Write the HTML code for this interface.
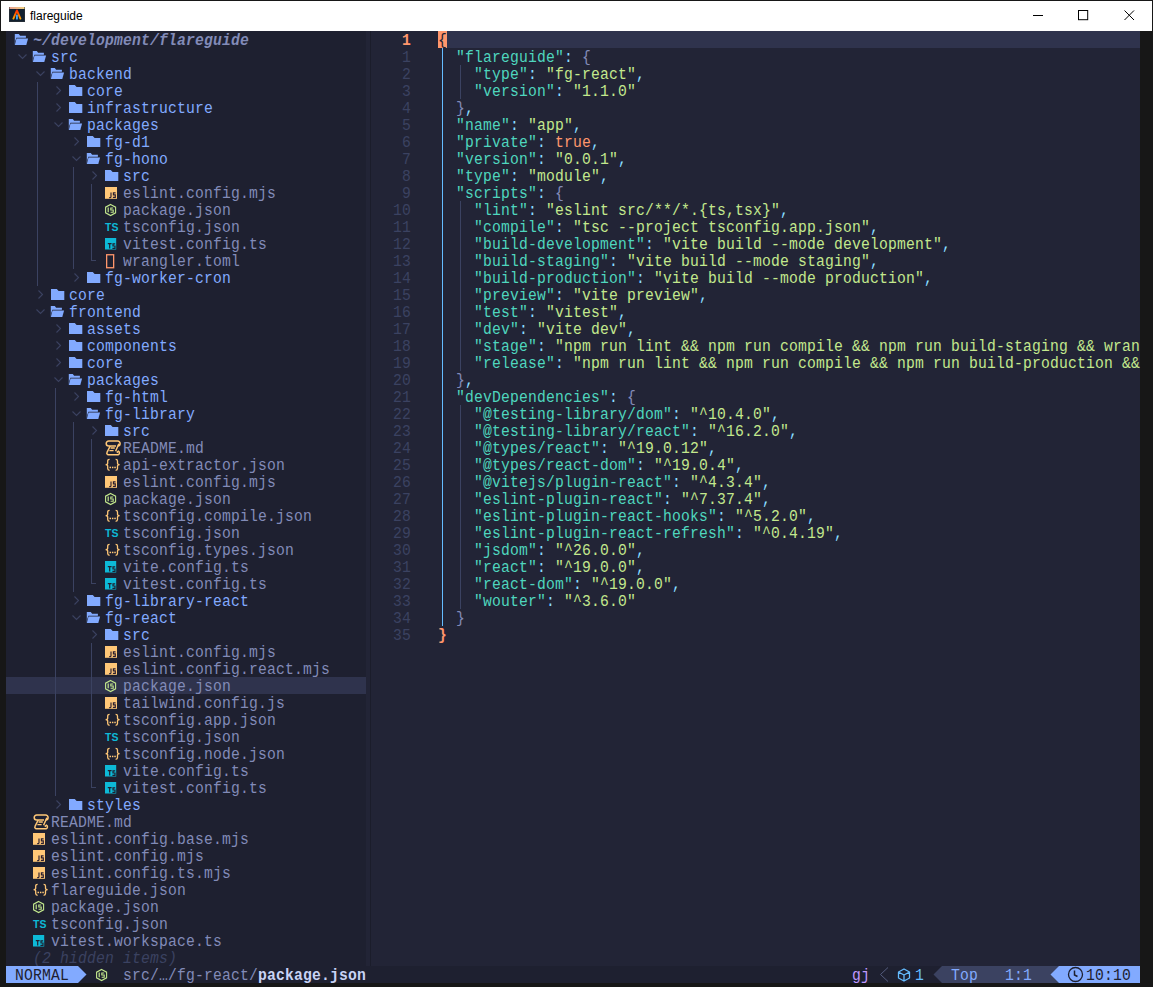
<!DOCTYPE html>
<html><head><meta charset="utf-8"><style>
html,body{margin:0;padding:0;}
body{width:1153px;height:987px;position:relative;overflow:hidden;background:#171717;}
.t{position:absolute;font-family:"Liberation Mono",monospace;font-size:16px;line-height:17px;height:17px;letter-spacing:0.1826px;white-space:pre;transform:scale(0.92,1.08);transform-origin:0 12px;}
svg{display:block;overflow:visible}
</style></head><body>
<div style="position:absolute;left:0px;top:0px;width:1153px;height:987px;background:#171717;"></div>
<div style="position:absolute;left:1px;top:1px;width:1151px;height:30px;background:#ffffff;"></div>
<svg style="position:absolute;left:9px;top:7px;" width="16" height="15" viewBox="0 0 16 15"><defs><linearGradient id="tg" x1="0" x2="1" y1="0" y2="0"><stop offset="0" stop-color="#e8a090"/><stop offset="1" stop-color="#f0d080"/></linearGradient><linearGradient id="ag" x1="0" x2="0" y1="0" y2="1"><stop offset="0" stop-color="#ff2a00"/><stop offset="1" stop-color="#ffa600"/></linearGradient></defs><rect x="0" y="0" width="16" height="15" fill="#2a3038"/><rect x="0.8" y="2" width="14.4" height="12.2" fill="#112030"/><rect x="0.5" y="0" width="15" height="2" fill="url(#tg)"/><path d="M4.4 11.6 L7.9 3.4 L11.4 11.6" stroke="url(#ag)" stroke-width="1.9" stroke-linecap="round" stroke-linejoin="round" fill="none"/><rect x="7" y="7.6" width="1.9" height="5" rx="0.9" fill="#4aa8f0"/></svg>
<div style="position:absolute;left:30px;top:8px;font-family:'Liberation Sans',sans-serif;font-size:12px;line-height:16px;color:#000">flareguide</div>
<div style="position:absolute;left:1033px;top:15px;width:10px;height:1px;background:#000;"></div>
<svg style="position:absolute;left:1078px;top:10px;" width="11" height="11" viewBox="0 0 11 11"><rect x="0.5" y="0.5" width="9.2" height="9.2" fill="none" stroke="#000" stroke-width="1"/></svg>
<svg style="position:absolute;left:1124px;top:10px;" width="11" height="11" viewBox="0 0 11 11"><path d="M0.5 0.5 L10 10 M10 0.5 L0.5 10" stroke="#000" stroke-width="1" fill="none"/></svg>
<div style="position:absolute;left:6px;top:31px;width:360px;height:935px;background:#1e2030;"></div>
<div style="position:absolute;left:366px;top:31px;width:774px;height:935px;background:#222436;"></div>
<div style="position:absolute;left:370px;top:31px;width:1px;height:935px;background:#1b1d2b;"></div>
<div style="position:absolute;left:6px;top:966px;width:1134px;height:17px;background:#1e2030;"></div>
<svg style="position:absolute;left:15px;top:34px;" width="14" height="12" viewBox="0 0 14 12"><path d="M-0.2 0 H3.8 L5.1 1.8 H10.9 V3.8 H1.4 L0.2 7.8 V11 H-0.2 Z" fill="#82aaff"/><path d="M1.5 4.5 H13.1 L11.3 11 H-0.1 Z" fill="#82aaff" stroke="#1e2030" stroke-width="0.5" paint-order="stroke"/></svg>
<div class="t" style="left:33px;top:33px;color:#828bb8;font-weight:bold;font-style:italic;">~/development/flareguide</div>
<div style="position:absolute;left:6px;top:677px;width:360px;height:17px;background:#2f334d;"></div>
<div style="position:absolute;left:37px;top:82px;width:1px;height:204px;background:#3b4261;"></div>
<div style="position:absolute;left:73px;top:167px;width:1px;height:102px;background:#3b4261;"></div>
<div style="position:absolute;left:55px;top:388px;width:1px;height:408px;background:#3b4261;"></div>
<div style="position:absolute;left:73px;top:422px;width:1px;height:170px;background:#3b4261;"></div>
<div style="position:absolute;left:91px;top:184px;width:1px;height:68px;background:#3b4261;"></div>
<div style="position:absolute;left:91px;top:252px;width:1px;height:9px;background:#3b4261;"></div>
<div style="position:absolute;left:91px;top:260px;width:5px;height:1px;background:#3b4261;"></div>
<div style="position:absolute;left:91px;top:439px;width:1px;height:136px;background:#3b4261;"></div>
<div style="position:absolute;left:91px;top:575px;width:1px;height:9px;background:#3b4261;"></div>
<div style="position:absolute;left:91px;top:583px;width:5px;height:1px;background:#3b4261;"></div>
<div style="position:absolute;left:91px;top:643px;width:1px;height:136px;background:#3b4261;"></div>
<div style="position:absolute;left:91px;top:779px;width:1px;height:9px;background:#3b4261;"></div>
<div style="position:absolute;left:91px;top:787px;width:5px;height:1px;background:#3b4261;"></div>
<svg style="position:absolute;left:18px;top:54px;" width="10" height="6" viewBox="0 0 10 6"><path d="M0.5 0.5 L4.5 4.5 L8.5 0.5" stroke="#3b4261" stroke-width="1.1" fill="none"/></svg>
<svg style="position:absolute;left:33px;top:51px;" width="14" height="12" viewBox="0 0 14 12"><path d="M-0.2 0 H3.8 L5.1 1.8 H10.9 V3.8 H1.4 L0.2 7.8 V11 H-0.2 Z" fill="#82aaff"/><path d="M1.5 4.5 H13.1 L11.3 11 H-0.1 Z" fill="#82aaff" stroke="#1e2030" stroke-width="0.5" paint-order="stroke"/></svg>
<div class="t" style="left:51px;top:50px;color:#82aaff;">src</div>
<svg style="position:absolute;left:36px;top:71px;" width="10" height="6" viewBox="0 0 10 6"><path d="M0.5 0.5 L4.5 4.5 L8.5 0.5" stroke="#3b4261" stroke-width="1.1" fill="none"/></svg>
<svg style="position:absolute;left:51px;top:68px;" width="14" height="12" viewBox="0 0 14 12"><path d="M-0.2 0 H3.8 L5.1 1.8 H10.9 V3.8 H1.4 L0.2 7.8 V11 H-0.2 Z" fill="#82aaff"/><path d="M1.5 4.5 H13.1 L11.3 11 H-0.1 Z" fill="#82aaff" stroke="#1e2030" stroke-width="0.5" paint-order="stroke"/></svg>
<div class="t" style="left:69px;top:67px;color:#82aaff;">backend</div>
<svg style="position:absolute;left:56px;top:86px;" width="6" height="10" viewBox="0 0 6 10"><path d="M0.5 0.5 L4.5 4.5 L0.5 8.5" stroke="#3b4261" stroke-width="1.1" fill="none"/></svg>
<svg style="position:absolute;left:69px;top:85px;" width="14" height="11" viewBox="0 0 14 11"><path d="M0 0 H5.8 L7.6 1.9 H13.3 V11.1 H0 Z" fill="#82aaff"/></svg>
<div class="t" style="left:87px;top:84px;color:#82aaff;">core</div>
<svg style="position:absolute;left:56px;top:103px;" width="6" height="10" viewBox="0 0 6 10"><path d="M0.5 0.5 L4.5 4.5 L0.5 8.5" stroke="#3b4261" stroke-width="1.1" fill="none"/></svg>
<svg style="position:absolute;left:69px;top:102px;" width="14" height="11" viewBox="0 0 14 11"><path d="M0 0 H5.8 L7.6 1.9 H13.3 V11.1 H0 Z" fill="#82aaff"/></svg>
<div class="t" style="left:87px;top:101px;color:#82aaff;">infrastructure</div>
<svg style="position:absolute;left:54px;top:122px;" width="10" height="6" viewBox="0 0 10 6"><path d="M0.5 0.5 L4.5 4.5 L8.5 0.5" stroke="#3b4261" stroke-width="1.1" fill="none"/></svg>
<svg style="position:absolute;left:69px;top:119px;" width="14" height="12" viewBox="0 0 14 12"><path d="M-0.2 0 H3.8 L5.1 1.8 H10.9 V3.8 H1.4 L0.2 7.8 V11 H-0.2 Z" fill="#82aaff"/><path d="M1.5 4.5 H13.1 L11.3 11 H-0.1 Z" fill="#82aaff" stroke="#1e2030" stroke-width="0.5" paint-order="stroke"/></svg>
<div class="t" style="left:87px;top:118px;color:#82aaff;">packages</div>
<svg style="position:absolute;left:74px;top:137px;" width="6" height="10" viewBox="0 0 6 10"><path d="M0.5 0.5 L4.5 4.5 L0.5 8.5" stroke="#3b4261" stroke-width="1.1" fill="none"/></svg>
<svg style="position:absolute;left:87px;top:136px;" width="14" height="11" viewBox="0 0 14 11"><path d="M0 0 H5.8 L7.6 1.9 H13.3 V11.1 H0 Z" fill="#82aaff"/></svg>
<div class="t" style="left:105px;top:135px;color:#82aaff;">fg-d1</div>
<svg style="position:absolute;left:72px;top:156px;" width="10" height="6" viewBox="0 0 10 6"><path d="M0.5 0.5 L4.5 4.5 L8.5 0.5" stroke="#3b4261" stroke-width="1.1" fill="none"/></svg>
<svg style="position:absolute;left:87px;top:153px;" width="14" height="12" viewBox="0 0 14 12"><path d="M-0.2 0 H3.8 L5.1 1.8 H10.9 V3.8 H1.4 L0.2 7.8 V11 H-0.2 Z" fill="#82aaff"/><path d="M1.5 4.5 H13.1 L11.3 11 H-0.1 Z" fill="#82aaff" stroke="#1e2030" stroke-width="0.5" paint-order="stroke"/></svg>
<div class="t" style="left:105px;top:152px;color:#82aaff;">fg-hono</div>
<svg style="position:absolute;left:92px;top:171px;" width="6" height="10" viewBox="0 0 6 10"><path d="M0.5 0.5 L4.5 4.5 L0.5 8.5" stroke="#3b4261" stroke-width="1.1" fill="none"/></svg>
<svg style="position:absolute;left:105px;top:170px;" width="14" height="11" viewBox="0 0 14 11"><path d="M0 0 H5.8 L7.6 1.9 H13.3 V11.1 H0 Z" fill="#82aaff"/></svg>
<div class="t" style="left:123px;top:169px;color:#82aaff;">src</div>
<svg style="position:absolute;left:105px;top:187px;" width="12" height="12" viewBox="0 0 12 12"><rect width="12" height="11.8" fill="#ffc777"/><path d="M6 5.6 V9.8 Q6 10.6 5.2 10.6 H4.2 M10.6 5.8 H8.4 V7.9 H10.3 V10.3 H7.9" fill="none" stroke="#2a1e30" stroke-width="1.15"/></svg>
<div class="t" style="left:123px;top:186px;color:#828bb8;">eslint.config.mjs</div>
<svg style="position:absolute;left:105px;top:203px;" width="13" height="14" viewBox="0 0 13 14"><path d="M5.6 1.5 L10.6 4.2 V9.8 L5.6 12.5 L0.6 9.8 V4.2 Z" fill="none" stroke="#c3e88d" stroke-width="1.1"/><path d="M3.2 4.5 V9.2" stroke="#c3e88d" stroke-width="1.2"/><path d="M8.2 5 H5.8 V7 H8.2 V9.2 H5.6" fill="none" stroke="#c3e88d" stroke-width="1.1"/></svg>
<div class="t" style="left:123px;top:203px;color:#828bb8;">package.json</div>
<svg style="position:absolute;left:105px;top:222px;" width="14" height="10" viewBox="0 0 14 10"><text x="0" y="9" font-family="Liberation Sans" font-weight="bold" font-size="10.5" fill="#0db9d7">TS</text></svg>
<div class="t" style="left:123px;top:220px;color:#828bb8;">tsconfig.json</div>
<svg style="position:absolute;left:105px;top:238px;" width="11" height="12" viewBox="0 0 11 12"><rect width="11.2" height="11.5" fill="#0db9d7"/><path d="M2.8 5.6 H6.6 M4.7 5.6 V10.6 M10.2 5.8 H8 V8 H10 V10.3 H7.4" fill="none" stroke="#1e2030" stroke-width="1.2"/></svg>
<div class="t" style="left:123px;top:237px;color:#828bb8;">vitest.config.ts</div>
<svg style="position:absolute;left:106px;top:254px;" width="9" height="15" viewBox="0 0 9 15"><rect x="0.65" y="0.75" width="7" height="13" fill="none" stroke="#ff966c" stroke-width="1.3"/></svg>
<div class="t" style="left:123px;top:254px;color:#828bb8;">wrangler.toml</div>
<svg style="position:absolute;left:74px;top:273px;" width="6" height="10" viewBox="0 0 6 10"><path d="M0.5 0.5 L4.5 4.5 L0.5 8.5" stroke="#3b4261" stroke-width="1.1" fill="none"/></svg>
<svg style="position:absolute;left:87px;top:272px;" width="14" height="11" viewBox="0 0 14 11"><path d="M0 0 H5.8 L7.6 1.9 H13.3 V11.1 H0 Z" fill="#82aaff"/></svg>
<div class="t" style="left:105px;top:271px;color:#82aaff;">fg-worker-cron</div>
<svg style="position:absolute;left:38px;top:290px;" width="6" height="10" viewBox="0 0 6 10"><path d="M0.5 0.5 L4.5 4.5 L0.5 8.5" stroke="#3b4261" stroke-width="1.1" fill="none"/></svg>
<svg style="position:absolute;left:51px;top:289px;" width="14" height="11" viewBox="0 0 14 11"><path d="M0 0 H5.8 L7.6 1.9 H13.3 V11.1 H0 Z" fill="#82aaff"/></svg>
<div class="t" style="left:69px;top:288px;color:#82aaff;">core</div>
<svg style="position:absolute;left:36px;top:309px;" width="10" height="6" viewBox="0 0 10 6"><path d="M0.5 0.5 L4.5 4.5 L8.5 0.5" stroke="#3b4261" stroke-width="1.1" fill="none"/></svg>
<svg style="position:absolute;left:51px;top:306px;" width="14" height="12" viewBox="0 0 14 12"><path d="M-0.2 0 H3.8 L5.1 1.8 H10.9 V3.8 H1.4 L0.2 7.8 V11 H-0.2 Z" fill="#82aaff"/><path d="M1.5 4.5 H13.1 L11.3 11 H-0.1 Z" fill="#82aaff" stroke="#1e2030" stroke-width="0.5" paint-order="stroke"/></svg>
<div class="t" style="left:69px;top:305px;color:#82aaff;">frontend</div>
<svg style="position:absolute;left:56px;top:324px;" width="6" height="10" viewBox="0 0 6 10"><path d="M0.5 0.5 L4.5 4.5 L0.5 8.5" stroke="#3b4261" stroke-width="1.1" fill="none"/></svg>
<svg style="position:absolute;left:69px;top:323px;" width="14" height="11" viewBox="0 0 14 11"><path d="M0 0 H5.8 L7.6 1.9 H13.3 V11.1 H0 Z" fill="#82aaff"/></svg>
<div class="t" style="left:87px;top:322px;color:#82aaff;">assets</div>
<svg style="position:absolute;left:56px;top:341px;" width="6" height="10" viewBox="0 0 6 10"><path d="M0.5 0.5 L4.5 4.5 L0.5 8.5" stroke="#3b4261" stroke-width="1.1" fill="none"/></svg>
<svg style="position:absolute;left:69px;top:340px;" width="14" height="11" viewBox="0 0 14 11"><path d="M0 0 H5.8 L7.6 1.9 H13.3 V11.1 H0 Z" fill="#82aaff"/></svg>
<div class="t" style="left:87px;top:339px;color:#82aaff;">components</div>
<svg style="position:absolute;left:56px;top:358px;" width="6" height="10" viewBox="0 0 6 10"><path d="M0.5 0.5 L4.5 4.5 L0.5 8.5" stroke="#3b4261" stroke-width="1.1" fill="none"/></svg>
<svg style="position:absolute;left:69px;top:357px;" width="14" height="11" viewBox="0 0 14 11"><path d="M0 0 H5.8 L7.6 1.9 H13.3 V11.1 H0 Z" fill="#82aaff"/></svg>
<div class="t" style="left:87px;top:356px;color:#82aaff;">core</div>
<svg style="position:absolute;left:54px;top:377px;" width="10" height="6" viewBox="0 0 10 6"><path d="M0.5 0.5 L4.5 4.5 L8.5 0.5" stroke="#3b4261" stroke-width="1.1" fill="none"/></svg>
<svg style="position:absolute;left:69px;top:374px;" width="14" height="12" viewBox="0 0 14 12"><path d="M-0.2 0 H3.8 L5.1 1.8 H10.9 V3.8 H1.4 L0.2 7.8 V11 H-0.2 Z" fill="#82aaff"/><path d="M1.5 4.5 H13.1 L11.3 11 H-0.1 Z" fill="#82aaff" stroke="#1e2030" stroke-width="0.5" paint-order="stroke"/></svg>
<div class="t" style="left:87px;top:373px;color:#82aaff;">packages</div>
<svg style="position:absolute;left:74px;top:392px;" width="6" height="10" viewBox="0 0 6 10"><path d="M0.5 0.5 L4.5 4.5 L0.5 8.5" stroke="#3b4261" stroke-width="1.1" fill="none"/></svg>
<svg style="position:absolute;left:87px;top:391px;" width="14" height="11" viewBox="0 0 14 11"><path d="M0 0 H5.8 L7.6 1.9 H13.3 V11.1 H0 Z" fill="#82aaff"/></svg>
<div class="t" style="left:105px;top:390px;color:#82aaff;">fg-html</div>
<svg style="position:absolute;left:72px;top:411px;" width="10" height="6" viewBox="0 0 10 6"><path d="M0.5 0.5 L4.5 4.5 L8.5 0.5" stroke="#3b4261" stroke-width="1.1" fill="none"/></svg>
<svg style="position:absolute;left:87px;top:408px;" width="14" height="12" viewBox="0 0 14 12"><path d="M-0.2 0 H3.8 L5.1 1.8 H10.9 V3.8 H1.4 L0.2 7.8 V11 H-0.2 Z" fill="#82aaff"/><path d="M1.5 4.5 H13.1 L11.3 11 H-0.1 Z" fill="#82aaff" stroke="#1e2030" stroke-width="0.5" paint-order="stroke"/></svg>
<div class="t" style="left:105px;top:407px;color:#82aaff;">fg-library</div>
<svg style="position:absolute;left:92px;top:426px;" width="6" height="10" viewBox="0 0 6 10"><path d="M0.5 0.5 L4.5 4.5 L0.5 8.5" stroke="#3b4261" stroke-width="1.1" fill="none"/></svg>
<svg style="position:absolute;left:105px;top:425px;" width="14" height="11" viewBox="0 0 14 11"><path d="M0 0 H5.8 L7.6 1.9 H13.3 V11.1 H0 Z" fill="#82aaff"/></svg>
<div class="t" style="left:123px;top:424px;color:#82aaff;">src</div>
<svg style="position:absolute;left:105px;top:439px;" width="16" height="17" viewBox="0 0 16 17"><path d="M3.7 2 H12.6 A2.5 2.5 0 0 1 12.6 7 M3.7 2 A2.5 2.5 0 0 0 3.7 7 H11" fill="none" stroke="#ffc777" stroke-width="1.5"/><path d="M5.2 7 L2 13.3 A1.6 1.6 0 0 0 3.4 15.7 H13.2 A1.9 1.9 0 0 0 13.4 12.2 L11.8 13.6 M13.9 4.8 L10.6 12.2" fill="none" stroke="#ffc777" stroke-width="1.5"/><path d="M5.6 9 H9.8 M4.4 11.7 H8.6" stroke="#ffc777" stroke-width="1.3"/></svg>
<div class="t" style="left:123px;top:441px;color:#828bb8;">README.md</div>
<svg style="position:absolute;left:105px;top:456px;" width="16" height="17" viewBox="0 0 16 17"><path d="M4.6 3.3 Q2.7 3.3 2.7 5 V7.6 Q2.7 8.7 0.6 8.7 Q2.7 8.7 2.7 9.8 V12.6 Q2.7 14.3 4.6 14.3" fill="none" stroke="#ffc777" stroke-width="1.3"/><path d="M10.6 3.3 Q12.5 3.3 12.5 5 V7.6 Q12.5 8.7 14.6 8.7 Q12.5 8.7 12.5 9.8 V12.6 Q12.5 14.3 10.6 14.3" fill="none" stroke="#ffc777" stroke-width="1.3"/><rect x="4.5" y="10.7" width="1.5" height="1.5" fill="#ffc777"/><rect x="6.9" y="10.7" width="1.5" height="1.5" fill="#ffc777"/><rect x="9.3" y="10.7" width="1.5" height="1.5" fill="#ffc777"/></svg>
<div class="t" style="left:123px;top:458px;color:#828bb8;">api-extractor.json</div>
<svg style="position:absolute;left:105px;top:476px;" width="12" height="12" viewBox="0 0 12 12"><rect width="12" height="11.8" fill="#ffc777"/><path d="M6 5.6 V9.8 Q6 10.6 5.2 10.6 H4.2 M10.6 5.8 H8.4 V7.9 H10.3 V10.3 H7.9" fill="none" stroke="#2a1e30" stroke-width="1.15"/></svg>
<div class="t" style="left:123px;top:475px;color:#828bb8;">eslint.config.mjs</div>
<svg style="position:absolute;left:105px;top:492px;" width="13" height="14" viewBox="0 0 13 14"><path d="M5.6 1.5 L10.6 4.2 V9.8 L5.6 12.5 L0.6 9.8 V4.2 Z" fill="none" stroke="#c3e88d" stroke-width="1.1"/><path d="M3.2 4.5 V9.2" stroke="#c3e88d" stroke-width="1.2"/><path d="M8.2 5 H5.8 V7 H8.2 V9.2 H5.6" fill="none" stroke="#c3e88d" stroke-width="1.1"/></svg>
<div class="t" style="left:123px;top:492px;color:#828bb8;">package.json</div>
<svg style="position:absolute;left:105px;top:507px;" width="16" height="17" viewBox="0 0 16 17"><path d="M4.6 3.3 Q2.7 3.3 2.7 5 V7.6 Q2.7 8.7 0.6 8.7 Q2.7 8.7 2.7 9.8 V12.6 Q2.7 14.3 4.6 14.3" fill="none" stroke="#ffc777" stroke-width="1.3"/><path d="M10.6 3.3 Q12.5 3.3 12.5 5 V7.6 Q12.5 8.7 14.6 8.7 Q12.5 8.7 12.5 9.8 V12.6 Q12.5 14.3 10.6 14.3" fill="none" stroke="#ffc777" stroke-width="1.3"/><rect x="4.5" y="10.7" width="1.5" height="1.5" fill="#ffc777"/><rect x="6.9" y="10.7" width="1.5" height="1.5" fill="#ffc777"/><rect x="9.3" y="10.7" width="1.5" height="1.5" fill="#ffc777"/></svg>
<div class="t" style="left:123px;top:509px;color:#828bb8;">tsconfig.compile.json</div>
<svg style="position:absolute;left:105px;top:528px;" width="14" height="10" viewBox="0 0 14 10"><text x="0" y="9" font-family="Liberation Sans" font-weight="bold" font-size="10.5" fill="#0db9d7">TS</text></svg>
<div class="t" style="left:123px;top:526px;color:#828bb8;">tsconfig.json</div>
<svg style="position:absolute;left:105px;top:541px;" width="16" height="17" viewBox="0 0 16 17"><path d="M4.6 3.3 Q2.7 3.3 2.7 5 V7.6 Q2.7 8.7 0.6 8.7 Q2.7 8.7 2.7 9.8 V12.6 Q2.7 14.3 4.6 14.3" fill="none" stroke="#ffc777" stroke-width="1.3"/><path d="M10.6 3.3 Q12.5 3.3 12.5 5 V7.6 Q12.5 8.7 14.6 8.7 Q12.5 8.7 12.5 9.8 V12.6 Q12.5 14.3 10.6 14.3" fill="none" stroke="#ffc777" stroke-width="1.3"/><rect x="4.5" y="10.7" width="1.5" height="1.5" fill="#ffc777"/><rect x="6.9" y="10.7" width="1.5" height="1.5" fill="#ffc777"/><rect x="9.3" y="10.7" width="1.5" height="1.5" fill="#ffc777"/></svg>
<div class="t" style="left:123px;top:543px;color:#828bb8;">tsconfig.types.json</div>
<svg style="position:absolute;left:105px;top:561px;" width="11" height="12" viewBox="0 0 11 12"><rect width="11.2" height="11.5" fill="#0db9d7"/><path d="M2.8 5.6 H6.6 M4.7 5.6 V10.6 M10.2 5.8 H8 V8 H10 V10.3 H7.4" fill="none" stroke="#1e2030" stroke-width="1.2"/></svg>
<div class="t" style="left:123px;top:560px;color:#828bb8;">vite.config.ts</div>
<svg style="position:absolute;left:105px;top:578px;" width="11" height="12" viewBox="0 0 11 12"><rect width="11.2" height="11.5" fill="#0db9d7"/><path d="M2.8 5.6 H6.6 M4.7 5.6 V10.6 M10.2 5.8 H8 V8 H10 V10.3 H7.4" fill="none" stroke="#1e2030" stroke-width="1.2"/></svg>
<div class="t" style="left:123px;top:577px;color:#828bb8;">vitest.config.ts</div>
<svg style="position:absolute;left:74px;top:596px;" width="6" height="10" viewBox="0 0 6 10"><path d="M0.5 0.5 L4.5 4.5 L0.5 8.5" stroke="#3b4261" stroke-width="1.1" fill="none"/></svg>
<svg style="position:absolute;left:87px;top:595px;" width="14" height="11" viewBox="0 0 14 11"><path d="M0 0 H5.8 L7.6 1.9 H13.3 V11.1 H0 Z" fill="#82aaff"/></svg>
<div class="t" style="left:105px;top:594px;color:#82aaff;">fg-library-react</div>
<svg style="position:absolute;left:72px;top:615px;" width="10" height="6" viewBox="0 0 10 6"><path d="M0.5 0.5 L4.5 4.5 L8.5 0.5" stroke="#3b4261" stroke-width="1.1" fill="none"/></svg>
<svg style="position:absolute;left:87px;top:612px;" width="14" height="12" viewBox="0 0 14 12"><path d="M-0.2 0 H3.8 L5.1 1.8 H10.9 V3.8 H1.4 L0.2 7.8 V11 H-0.2 Z" fill="#82aaff"/><path d="M1.5 4.5 H13.1 L11.3 11 H-0.1 Z" fill="#82aaff" stroke="#1e2030" stroke-width="0.5" paint-order="stroke"/></svg>
<div class="t" style="left:105px;top:611px;color:#82aaff;">fg-react</div>
<svg style="position:absolute;left:92px;top:630px;" width="6" height="10" viewBox="0 0 6 10"><path d="M0.5 0.5 L4.5 4.5 L0.5 8.5" stroke="#3b4261" stroke-width="1.1" fill="none"/></svg>
<svg style="position:absolute;left:105px;top:629px;" width="14" height="11" viewBox="0 0 14 11"><path d="M0 0 H5.8 L7.6 1.9 H13.3 V11.1 H0 Z" fill="#82aaff"/></svg>
<div class="t" style="left:123px;top:628px;color:#82aaff;">src</div>
<svg style="position:absolute;left:105px;top:646px;" width="12" height="12" viewBox="0 0 12 12"><rect width="12" height="11.8" fill="#ffc777"/><path d="M6 5.6 V9.8 Q6 10.6 5.2 10.6 H4.2 M10.6 5.8 H8.4 V7.9 H10.3 V10.3 H7.9" fill="none" stroke="#2a1e30" stroke-width="1.15"/></svg>
<div class="t" style="left:123px;top:645px;color:#828bb8;">eslint.config.mjs</div>
<svg style="position:absolute;left:105px;top:663px;" width="12" height="12" viewBox="0 0 12 12"><rect width="12" height="11.8" fill="#ffc777"/><path d="M6 5.6 V9.8 Q6 10.6 5.2 10.6 H4.2 M10.6 5.8 H8.4 V7.9 H10.3 V10.3 H7.9" fill="none" stroke="#2a1e30" stroke-width="1.15"/></svg>
<div class="t" style="left:123px;top:662px;color:#828bb8;">eslint.config.react.mjs</div>
<svg style="position:absolute;left:105px;top:679px;" width="13" height="14" viewBox="0 0 13 14"><path d="M5.6 1.5 L10.6 4.2 V9.8 L5.6 12.5 L0.6 9.8 V4.2 Z" fill="none" stroke="#c3e88d" stroke-width="1.1"/><path d="M3.2 4.5 V9.2" stroke="#c3e88d" stroke-width="1.2"/><path d="M8.2 5 H5.8 V7 H8.2 V9.2 H5.6" fill="none" stroke="#c3e88d" stroke-width="1.1"/></svg>
<div class="t" style="left:123px;top:679px;color:#828bb8;">package.json</div>
<svg style="position:absolute;left:105px;top:697px;" width="12" height="12" viewBox="0 0 12 12"><rect width="12" height="11.8" fill="#ffc777"/><path d="M6 5.6 V9.8 Q6 10.6 5.2 10.6 H4.2 M10.6 5.8 H8.4 V7.9 H10.3 V10.3 H7.9" fill="none" stroke="#2a1e30" stroke-width="1.15"/></svg>
<div class="t" style="left:123px;top:696px;color:#828bb8;">tailwind.config.js</div>
<svg style="position:absolute;left:105px;top:711px;" width="16" height="17" viewBox="0 0 16 17"><path d="M4.6 3.3 Q2.7 3.3 2.7 5 V7.6 Q2.7 8.7 0.6 8.7 Q2.7 8.7 2.7 9.8 V12.6 Q2.7 14.3 4.6 14.3" fill="none" stroke="#ffc777" stroke-width="1.3"/><path d="M10.6 3.3 Q12.5 3.3 12.5 5 V7.6 Q12.5 8.7 14.6 8.7 Q12.5 8.7 12.5 9.8 V12.6 Q12.5 14.3 10.6 14.3" fill="none" stroke="#ffc777" stroke-width="1.3"/><rect x="4.5" y="10.7" width="1.5" height="1.5" fill="#ffc777"/><rect x="6.9" y="10.7" width="1.5" height="1.5" fill="#ffc777"/><rect x="9.3" y="10.7" width="1.5" height="1.5" fill="#ffc777"/></svg>
<div class="t" style="left:123px;top:713px;color:#828bb8;">tsconfig.app.json</div>
<svg style="position:absolute;left:105px;top:732px;" width="14" height="10" viewBox="0 0 14 10"><text x="0" y="9" font-family="Liberation Sans" font-weight="bold" font-size="10.5" fill="#0db9d7">TS</text></svg>
<div class="t" style="left:123px;top:730px;color:#828bb8;">tsconfig.json</div>
<svg style="position:absolute;left:105px;top:745px;" width="16" height="17" viewBox="0 0 16 17"><path d="M4.6 3.3 Q2.7 3.3 2.7 5 V7.6 Q2.7 8.7 0.6 8.7 Q2.7 8.7 2.7 9.8 V12.6 Q2.7 14.3 4.6 14.3" fill="none" stroke="#ffc777" stroke-width="1.3"/><path d="M10.6 3.3 Q12.5 3.3 12.5 5 V7.6 Q12.5 8.7 14.6 8.7 Q12.5 8.7 12.5 9.8 V12.6 Q12.5 14.3 10.6 14.3" fill="none" stroke="#ffc777" stroke-width="1.3"/><rect x="4.5" y="10.7" width="1.5" height="1.5" fill="#ffc777"/><rect x="6.9" y="10.7" width="1.5" height="1.5" fill="#ffc777"/><rect x="9.3" y="10.7" width="1.5" height="1.5" fill="#ffc777"/></svg>
<div class="t" style="left:123px;top:747px;color:#828bb8;">tsconfig.node.json</div>
<svg style="position:absolute;left:105px;top:765px;" width="11" height="12" viewBox="0 0 11 12"><rect width="11.2" height="11.5" fill="#0db9d7"/><path d="M2.8 5.6 H6.6 M4.7 5.6 V10.6 M10.2 5.8 H8 V8 H10 V10.3 H7.4" fill="none" stroke="#1e2030" stroke-width="1.2"/></svg>
<div class="t" style="left:123px;top:764px;color:#828bb8;">vite.config.ts</div>
<svg style="position:absolute;left:105px;top:782px;" width="11" height="12" viewBox="0 0 11 12"><rect width="11.2" height="11.5" fill="#0db9d7"/><path d="M2.8 5.6 H6.6 M4.7 5.6 V10.6 M10.2 5.8 H8 V8 H10 V10.3 H7.4" fill="none" stroke="#1e2030" stroke-width="1.2"/></svg>
<div class="t" style="left:123px;top:781px;color:#828bb8;">vitest.config.ts</div>
<svg style="position:absolute;left:56px;top:800px;" width="6" height="10" viewBox="0 0 6 10"><path d="M0.5 0.5 L4.5 4.5 L0.5 8.5" stroke="#3b4261" stroke-width="1.1" fill="none"/></svg>
<svg style="position:absolute;left:69px;top:799px;" width="14" height="11" viewBox="0 0 14 11"><path d="M0 0 H5.8 L7.6 1.9 H13.3 V11.1 H0 Z" fill="#82aaff"/></svg>
<div class="t" style="left:87px;top:798px;color:#82aaff;">styles</div>
<svg style="position:absolute;left:33px;top:813px;" width="16" height="17" viewBox="0 0 16 17"><path d="M3.7 2 H12.6 A2.5 2.5 0 0 1 12.6 7 M3.7 2 A2.5 2.5 0 0 0 3.7 7 H11" fill="none" stroke="#ffc777" stroke-width="1.5"/><path d="M5.2 7 L2 13.3 A1.6 1.6 0 0 0 3.4 15.7 H13.2 A1.9 1.9 0 0 0 13.4 12.2 L11.8 13.6 M13.9 4.8 L10.6 12.2" fill="none" stroke="#ffc777" stroke-width="1.5"/><path d="M5.6 9 H9.8 M4.4 11.7 H8.6" stroke="#ffc777" stroke-width="1.3"/></svg>
<div class="t" style="left:51px;top:815px;color:#828bb8;">README.md</div>
<svg style="position:absolute;left:33px;top:833px;" width="12" height="12" viewBox="0 0 12 12"><rect width="12" height="11.8" fill="#ffc777"/><path d="M6 5.6 V9.8 Q6 10.6 5.2 10.6 H4.2 M10.6 5.8 H8.4 V7.9 H10.3 V10.3 H7.9" fill="none" stroke="#2a1e30" stroke-width="1.15"/></svg>
<div class="t" style="left:51px;top:832px;color:#828bb8;">eslint.config.base.mjs</div>
<svg style="position:absolute;left:33px;top:850px;" width="12" height="12" viewBox="0 0 12 12"><rect width="12" height="11.8" fill="#ffc777"/><path d="M6 5.6 V9.8 Q6 10.6 5.2 10.6 H4.2 M10.6 5.8 H8.4 V7.9 H10.3 V10.3 H7.9" fill="none" stroke="#2a1e30" stroke-width="1.15"/></svg>
<div class="t" style="left:51px;top:849px;color:#828bb8;">eslint.config.mjs</div>
<svg style="position:absolute;left:33px;top:867px;" width="12" height="12" viewBox="0 0 12 12"><rect width="12" height="11.8" fill="#ffc777"/><path d="M6 5.6 V9.8 Q6 10.6 5.2 10.6 H4.2 M10.6 5.8 H8.4 V7.9 H10.3 V10.3 H7.9" fill="none" stroke="#2a1e30" stroke-width="1.15"/></svg>
<div class="t" style="left:51px;top:866px;color:#828bb8;">eslint.config.ts.mjs</div>
<svg style="position:absolute;left:33px;top:881px;" width="16" height="17" viewBox="0 0 16 17"><path d="M4.6 3.3 Q2.7 3.3 2.7 5 V7.6 Q2.7 8.7 0.6 8.7 Q2.7 8.7 2.7 9.8 V12.6 Q2.7 14.3 4.6 14.3" fill="none" stroke="#ffc777" stroke-width="1.3"/><path d="M10.6 3.3 Q12.5 3.3 12.5 5 V7.6 Q12.5 8.7 14.6 8.7 Q12.5 8.7 12.5 9.8 V12.6 Q12.5 14.3 10.6 14.3" fill="none" stroke="#ffc777" stroke-width="1.3"/><rect x="4.5" y="10.7" width="1.5" height="1.5" fill="#ffc777"/><rect x="6.9" y="10.7" width="1.5" height="1.5" fill="#ffc777"/><rect x="9.3" y="10.7" width="1.5" height="1.5" fill="#ffc777"/></svg>
<div class="t" style="left:51px;top:883px;color:#828bb8;">flareguide.json</div>
<svg style="position:absolute;left:33px;top:900px;" width="13" height="14" viewBox="0 0 13 14"><path d="M5.6 1.5 L10.6 4.2 V9.8 L5.6 12.5 L0.6 9.8 V4.2 Z" fill="none" stroke="#c3e88d" stroke-width="1.1"/><path d="M3.2 4.5 V9.2" stroke="#c3e88d" stroke-width="1.2"/><path d="M8.2 5 H5.8 V7 H8.2 V9.2 H5.6" fill="none" stroke="#c3e88d" stroke-width="1.1"/></svg>
<div class="t" style="left:51px;top:900px;color:#828bb8;">package.json</div>
<svg style="position:absolute;left:33px;top:919px;" width="14" height="10" viewBox="0 0 14 10"><text x="0" y="9" font-family="Liberation Sans" font-weight="bold" font-size="10.5" fill="#0db9d7">TS</text></svg>
<div class="t" style="left:51px;top:917px;color:#828bb8;">tsconfig.json</div>
<svg style="position:absolute;left:33px;top:935px;" width="11" height="12" viewBox="0 0 11 12"><rect width="11.2" height="11.5" fill="#0db9d7"/><path d="M2.8 5.6 H6.6 M4.7 5.6 V10.6 M10.2 5.8 H8 V8 H10 V10.3 H7.4" fill="none" stroke="#1e2030" stroke-width="1.2"/></svg>
<div class="t" style="left:51px;top:934px;color:#828bb8;">vitest.workspace.ts</div>
<div class="t" style="left:33px;top:951px;color:#3b4261;font-style:italic;">(2 hidden items)</div>
<div style="position:absolute;left:447px;top:31px;width:693px;height:17px;background:#2f334d;"></div>
<div style="position:absolute;left:438px;top:31px;width:9px;height:17px;background:#ff966c;"></div>
<div class="t" style="left:402px;top:33px;color:#ff966c;font-weight:bold;">1</div>
<div class="t" style="left:402px;top:50px;color:#3b4261;">1</div>
<div class="t" style="left:402px;top:67px;color:#3b4261;">2</div>
<div class="t" style="left:402px;top:84px;color:#3b4261;">3</div>
<div class="t" style="left:402px;top:101px;color:#3b4261;">4</div>
<div class="t" style="left:402px;top:118px;color:#3b4261;">5</div>
<div class="t" style="left:402px;top:135px;color:#3b4261;">6</div>
<div class="t" style="left:402px;top:152px;color:#3b4261;">7</div>
<div class="t" style="left:402px;top:169px;color:#3b4261;">8</div>
<div class="t" style="left:402px;top:186px;color:#3b4261;">9</div>
<div class="t" style="left:393px;top:203px;color:#3b4261;">10</div>
<div class="t" style="left:393px;top:220px;color:#3b4261;">11</div>
<div class="t" style="left:393px;top:237px;color:#3b4261;">12</div>
<div class="t" style="left:393px;top:254px;color:#3b4261;">13</div>
<div class="t" style="left:393px;top:271px;color:#3b4261;">14</div>
<div class="t" style="left:393px;top:288px;color:#3b4261;">15</div>
<div class="t" style="left:393px;top:305px;color:#3b4261;">16</div>
<div class="t" style="left:393px;top:322px;color:#3b4261;">17</div>
<div class="t" style="left:393px;top:339px;color:#3b4261;">18</div>
<div class="t" style="left:393px;top:356px;color:#3b4261;">19</div>
<div class="t" style="left:393px;top:373px;color:#3b4261;">20</div>
<div class="t" style="left:393px;top:390px;color:#3b4261;">21</div>
<div class="t" style="left:393px;top:407px;color:#3b4261;">22</div>
<div class="t" style="left:393px;top:424px;color:#3b4261;">23</div>
<div class="t" style="left:393px;top:441px;color:#3b4261;">24</div>
<div class="t" style="left:393px;top:458px;color:#3b4261;">25</div>
<div class="t" style="left:393px;top:475px;color:#3b4261;">26</div>
<div class="t" style="left:393px;top:492px;color:#3b4261;">27</div>
<div class="t" style="left:393px;top:509px;color:#3b4261;">28</div>
<div class="t" style="left:393px;top:526px;color:#3b4261;">29</div>
<div class="t" style="left:393px;top:543px;color:#3b4261;">30</div>
<div class="t" style="left:393px;top:560px;color:#3b4261;">31</div>
<div class="t" style="left:393px;top:577px;color:#3b4261;">32</div>
<div class="t" style="left:393px;top:594px;color:#3b4261;">33</div>
<div class="t" style="left:393px;top:611px;color:#3b4261;">34</div>
<div class="t" style="left:393px;top:628px;color:#3b4261;">35</div>
<div style="position:absolute;left:442px;top:48px;width:1px;height:578px;background:#65bcff;"></div>
<div style="position:absolute;left:460px;top:65px;width:1px;height:34px;background:#3b4261;"></div>
<div style="position:absolute;left:460px;top:201px;width:1px;height:170px;background:#3b4261;"></div>
<div style="position:absolute;left:460px;top:405px;width:1px;height:204px;background:#3b4261;"></div>
<div class="t" style="left:438px;top:33px;color:#1e2030;">{</div>
<div class="t" style="left:456px;top:50px;color:#4fd6be;">&quot;flareguide&quot;</div>
<div class="t" style="left:564px;top:50px;color:#89ddff;">:</div>
<div class="t" style="left:582px;top:50px;color:#828bb8;">{</div>
<div class="t" style="left:474px;top:67px;color:#4fd6be;">&quot;type&quot;</div>
<div class="t" style="left:528px;top:67px;color:#89ddff;">:</div>
<div class="t" style="left:546px;top:67px;color:#c3e88d;">&quot;fg-react&quot;</div>
<div class="t" style="left:636px;top:67px;color:#89ddff;">,</div>
<div class="t" style="left:474px;top:84px;color:#4fd6be;">&quot;version&quot;</div>
<div class="t" style="left:555px;top:84px;color:#89ddff;">:</div>
<div class="t" style="left:573px;top:84px;color:#c3e88d;">&quot;1.1.0&quot;</div>
<div class="t" style="left:456px;top:101px;color:#828bb8;">}</div>
<div class="t" style="left:465px;top:101px;color:#89ddff;">,</div>
<div class="t" style="left:456px;top:118px;color:#4fd6be;">&quot;name&quot;</div>
<div class="t" style="left:510px;top:118px;color:#89ddff;">:</div>
<div class="t" style="left:528px;top:118px;color:#c3e88d;">&quot;app&quot;</div>
<div class="t" style="left:573px;top:118px;color:#89ddff;">,</div>
<div class="t" style="left:456px;top:135px;color:#4fd6be;">&quot;private&quot;</div>
<div class="t" style="left:537px;top:135px;color:#89ddff;">:</div>
<div class="t" style="left:555px;top:135px;color:#ff966c;">true</div>
<div class="t" style="left:591px;top:135px;color:#89ddff;">,</div>
<div class="t" style="left:456px;top:152px;color:#4fd6be;">&quot;version&quot;</div>
<div class="t" style="left:537px;top:152px;color:#89ddff;">:</div>
<div class="t" style="left:555px;top:152px;color:#c3e88d;">&quot;0.0.1&quot;</div>
<div class="t" style="left:618px;top:152px;color:#89ddff;">,</div>
<div class="t" style="left:456px;top:169px;color:#4fd6be;">&quot;type&quot;</div>
<div class="t" style="left:510px;top:169px;color:#89ddff;">:</div>
<div class="t" style="left:528px;top:169px;color:#c3e88d;">&quot;module&quot;</div>
<div class="t" style="left:600px;top:169px;color:#89ddff;">,</div>
<div class="t" style="left:456px;top:186px;color:#4fd6be;">&quot;scripts&quot;</div>
<div class="t" style="left:537px;top:186px;color:#89ddff;">:</div>
<div class="t" style="left:555px;top:186px;color:#828bb8;">{</div>
<div class="t" style="left:474px;top:203px;color:#4fd6be;">&quot;lint&quot;</div>
<div class="t" style="left:528px;top:203px;color:#89ddff;">:</div>
<div class="t" style="left:546px;top:203px;color:#c3e88d;">&quot;eslint src/**/*.{ts,tsx}&quot;</div>
<div class="t" style="left:780px;top:203px;color:#89ddff;">,</div>
<div class="t" style="left:474px;top:220px;color:#4fd6be;">&quot;compile&quot;</div>
<div class="t" style="left:555px;top:220px;color:#89ddff;">:</div>
<div class="t" style="left:573px;top:220px;color:#c3e88d;">&quot;tsc --project tsconfig.app.json&quot;</div>
<div class="t" style="left:870px;top:220px;color:#89ddff;">,</div>
<div class="t" style="left:474px;top:237px;color:#4fd6be;">&quot;build-development&quot;</div>
<div class="t" style="left:645px;top:237px;color:#89ddff;">:</div>
<div class="t" style="left:663px;top:237px;color:#c3e88d;">&quot;vite build --mode development&quot;</div>
<div class="t" style="left:942px;top:237px;color:#89ddff;">,</div>
<div class="t" style="left:474px;top:254px;color:#4fd6be;">&quot;build-staging&quot;</div>
<div class="t" style="left:609px;top:254px;color:#89ddff;">:</div>
<div class="t" style="left:627px;top:254px;color:#c3e88d;">&quot;vite build --mode staging&quot;</div>
<div class="t" style="left:870px;top:254px;color:#89ddff;">,</div>
<div class="t" style="left:474px;top:271px;color:#4fd6be;">&quot;build-production&quot;</div>
<div class="t" style="left:636px;top:271px;color:#89ddff;">:</div>
<div class="t" style="left:654px;top:271px;color:#c3e88d;">&quot;vite build --mode production&quot;</div>
<div class="t" style="left:924px;top:271px;color:#89ddff;">,</div>
<div class="t" style="left:474px;top:288px;color:#4fd6be;">&quot;preview&quot;</div>
<div class="t" style="left:555px;top:288px;color:#89ddff;">:</div>
<div class="t" style="left:573px;top:288px;color:#c3e88d;">&quot;vite preview&quot;</div>
<div class="t" style="left:699px;top:288px;color:#89ddff;">,</div>
<div class="t" style="left:474px;top:305px;color:#4fd6be;">&quot;test&quot;</div>
<div class="t" style="left:528px;top:305px;color:#89ddff;">:</div>
<div class="t" style="left:546px;top:305px;color:#c3e88d;">&quot;vitest&quot;</div>
<div class="t" style="left:618px;top:305px;color:#89ddff;">,</div>
<div class="t" style="left:474px;top:322px;color:#4fd6be;">&quot;dev&quot;</div>
<div class="t" style="left:519px;top:322px;color:#89ddff;">:</div>
<div class="t" style="left:537px;top:322px;color:#c3e88d;">&quot;vite dev&quot;</div>
<div class="t" style="left:627px;top:322px;color:#89ddff;">,</div>
<div class="t" style="left:474px;top:339px;color:#4fd6be;">&quot;stage&quot;</div>
<div class="t" style="left:537px;top:339px;color:#89ddff;">:</div>
<div class="t" style="left:555px;top:339px;color:#c3e88d;">&quot;npm run lint &amp;&amp; npm run compile &amp;&amp; npm run build-staging &amp;&amp; wran</div>
<div class="t" style="left:474px;top:356px;color:#4fd6be;">&quot;release&quot;</div>
<div class="t" style="left:555px;top:356px;color:#89ddff;">:</div>
<div class="t" style="left:573px;top:356px;color:#c3e88d;">&quot;npm run lint &amp;&amp; npm run compile &amp;&amp; npm run build-production &amp;&amp;</div>
<div class="t" style="left:456px;top:373px;color:#828bb8;">}</div>
<div class="t" style="left:465px;top:373px;color:#89ddff;">,</div>
<div class="t" style="left:456px;top:390px;color:#4fd6be;">&quot;devDependencies&quot;</div>
<div class="t" style="left:609px;top:390px;color:#89ddff;">:</div>
<div class="t" style="left:627px;top:390px;color:#828bb8;">{</div>
<div class="t" style="left:474px;top:407px;color:#4fd6be;">&quot;@testing-library/dom&quot;</div>
<div class="t" style="left:672px;top:407px;color:#89ddff;">:</div>
<div class="t" style="left:690px;top:407px;color:#c3e88d;">&quot;^10.4.0&quot;</div>
<div class="t" style="left:771px;top:407px;color:#89ddff;">,</div>
<div class="t" style="left:474px;top:424px;color:#4fd6be;">&quot;@testing-library/react&quot;</div>
<div class="t" style="left:690px;top:424px;color:#89ddff;">:</div>
<div class="t" style="left:708px;top:424px;color:#c3e88d;">&quot;^16.2.0&quot;</div>
<div class="t" style="left:789px;top:424px;color:#89ddff;">,</div>
<div class="t" style="left:474px;top:441px;color:#4fd6be;">&quot;@types/react&quot;</div>
<div class="t" style="left:600px;top:441px;color:#89ddff;">:</div>
<div class="t" style="left:618px;top:441px;color:#c3e88d;">&quot;^19.0.12&quot;</div>
<div class="t" style="left:708px;top:441px;color:#89ddff;">,</div>
<div class="t" style="left:474px;top:458px;color:#4fd6be;">&quot;@types/react-dom&quot;</div>
<div class="t" style="left:636px;top:458px;color:#89ddff;">:</div>
<div class="t" style="left:654px;top:458px;color:#c3e88d;">&quot;^19.0.4&quot;</div>
<div class="t" style="left:735px;top:458px;color:#89ddff;">,</div>
<div class="t" style="left:474px;top:475px;color:#4fd6be;">&quot;@vitejs/plugin-react&quot;</div>
<div class="t" style="left:672px;top:475px;color:#89ddff;">:</div>
<div class="t" style="left:690px;top:475px;color:#c3e88d;">&quot;^4.3.4&quot;</div>
<div class="t" style="left:762px;top:475px;color:#89ddff;">,</div>
<div class="t" style="left:474px;top:492px;color:#4fd6be;">&quot;eslint-plugin-react&quot;</div>
<div class="t" style="left:663px;top:492px;color:#89ddff;">:</div>
<div class="t" style="left:681px;top:492px;color:#c3e88d;">&quot;^7.37.4&quot;</div>
<div class="t" style="left:762px;top:492px;color:#89ddff;">,</div>
<div class="t" style="left:474px;top:509px;color:#4fd6be;">&quot;eslint-plugin-react-hooks&quot;</div>
<div class="t" style="left:717px;top:509px;color:#89ddff;">:</div>
<div class="t" style="left:735px;top:509px;color:#c3e88d;">&quot;^5.2.0&quot;</div>
<div class="t" style="left:807px;top:509px;color:#89ddff;">,</div>
<div class="t" style="left:474px;top:526px;color:#4fd6be;">&quot;eslint-plugin-react-refresh&quot;</div>
<div class="t" style="left:735px;top:526px;color:#89ddff;">:</div>
<div class="t" style="left:753px;top:526px;color:#c3e88d;">&quot;^0.4.19&quot;</div>
<div class="t" style="left:834px;top:526px;color:#89ddff;">,</div>
<div class="t" style="left:474px;top:543px;color:#4fd6be;">&quot;jsdom&quot;</div>
<div class="t" style="left:537px;top:543px;color:#89ddff;">:</div>
<div class="t" style="left:555px;top:543px;color:#c3e88d;">&quot;^26.0.0&quot;</div>
<div class="t" style="left:636px;top:543px;color:#89ddff;">,</div>
<div class="t" style="left:474px;top:560px;color:#4fd6be;">&quot;react&quot;</div>
<div class="t" style="left:537px;top:560px;color:#89ddff;">:</div>
<div class="t" style="left:555px;top:560px;color:#c3e88d;">&quot;^19.0.0&quot;</div>
<div class="t" style="left:636px;top:560px;color:#89ddff;">,</div>
<div class="t" style="left:474px;top:577px;color:#4fd6be;">&quot;react-dom&quot;</div>
<div class="t" style="left:573px;top:577px;color:#89ddff;">:</div>
<div class="t" style="left:591px;top:577px;color:#c3e88d;">&quot;^19.0.0&quot;</div>
<div class="t" style="left:672px;top:577px;color:#89ddff;">,</div>
<div class="t" style="left:474px;top:594px;color:#4fd6be;">&quot;wouter&quot;</div>
<div class="t" style="left:546px;top:594px;color:#89ddff;">:</div>
<div class="t" style="left:564px;top:594px;color:#c3e88d;">&quot;^3.6.0&quot;</div>
<div class="t" style="left:456px;top:611px;color:#828bb8;">}</div>
<div class="t" style="left:438px;top:628px;color:#ff966c;font-weight:bold;">}</div>
<div style="position:absolute;left:6px;top:966px;width:72px;height:17px;background:#82aaff;"></div>
<svg style="position:absolute;left:78px;top:966px;" width="9" height="17" viewBox="0 0 9 17"><path d="M0 0 L8.5 8.5 L0 17 Z" fill="#82aaff"/></svg>
<div class="t" style="left:15px;top:968px;color:#1e2030;">NORMAL</div>
<svg style="position:absolute;left:96px;top:968px;" width="13" height="14" viewBox="0 0 13 14"><path d="M5.6 1.5 L10.6 4.2 V9.8 L5.6 12.5 L0.6 9.8 V4.2 Z" fill="none" stroke="#c3e88d" stroke-width="1.1"/><path d="M3.2 4.5 V9.2" stroke="#c3e88d" stroke-width="1.2"/><path d="M8.2 5 H5.8 V7 H8.2 V9.2 H5.6" fill="none" stroke="#c3e88d" stroke-width="1.1"/></svg>
<div class="t" style="left:123px;top:968px;color:#828bb8;">src/…/fg-react/</div>
<div class="t" style="left:258px;top:968px;color:#c8d3f5;font-weight:bold;">package.json</div>
<div class="t" style="left:852px;top:968px;color:#c099ff;">g</div>
<div class="t" style="left:861px;top:968px;color:#c099ff;">j</div>
<svg style="position:absolute;left:879px;top:966px;" width="10" height="17" viewBox="0 0 10 17"><path d="M9 1.5 L1.5 8.5 L9 15.5" stroke="#545c7e" stroke-width="1" fill="none"/></svg>
<svg style="position:absolute;left:897px;top:968px;" width="14" height="14" viewBox="0 0 14 14"><path d="M7 1 L12.5 4 V10 L7 13 L1.5 10 V4 Z M1.5 4 L7 7 L12.5 4 M7 7 V13" fill="none" stroke="#65bcff" stroke-width="1.3" stroke-linejoin="round"/></svg>
<div class="t" style="left:915px;top:968px;color:#65bcff;">1</div>
<div style="position:absolute;left:942px;top:966px;width:117px;height:17px;background:#3b4261;"></div>
<svg style="position:absolute;left:933px;top:966px;" width="9" height="17" viewBox="0 0 9 17"><path d="M9 0 L0.5 8.5 L9 17 Z" fill="#3b4261"/></svg>
<div class="t" style="left:951px;top:968px;color:#82aaff;">Top</div>
<div class="t" style="left:1005px;top:968px;color:#82aaff;">1:1</div>
<div style="position:absolute;left:1059px;top:966px;width:81px;height:17px;background:#82aaff;"></div>
<svg style="position:absolute;left:1050px;top:966px;" width="9" height="17" viewBox="0 0 9 17"><path d="M9 0 L0.5 8.5 L9 17 Z" fill="#82aaff"/></svg>
<svg style="position:absolute;left:1067px;top:966px;" width="17" height="17" viewBox="0 0 17 17"><circle cx="8.5" cy="8.5" r="7" fill="none" stroke="#1e2030" stroke-width="1.3"/><path d="M7.5 4.5 V9 L10.5 10.5" fill="none" stroke="#1e2030" stroke-width="1.5"/></svg>
<div class="t" style="left:1086px;top:968px;color:#1e2030;">10:10</div>
</body></html>
